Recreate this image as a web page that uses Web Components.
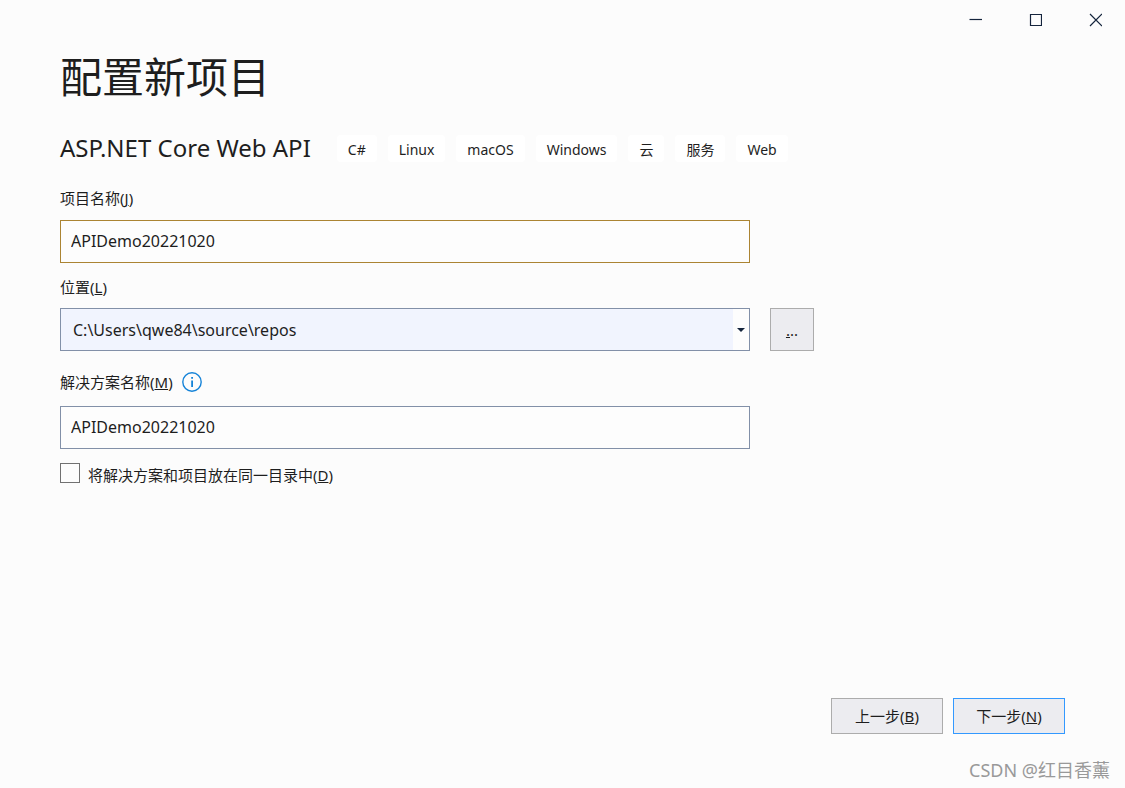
<!DOCTYPE html>
<html lang="zh-CN">
<head>
<meta charset="utf-8">
<title>配置新项目</title>
<style>
  body {
    margin: 0;
    background: #fcfcfc;
    color: #1e1e1e;
    font-family: "Noto Sans", "Noto Sans CJK SC", sans-serif;
    font-size: 15px;
    line-height: 20px;
  }
</style>
</head>
<body>
<project-wizard></project-wizard>

<template id="window-bar">
  <style>
    :host {
      display: flex;
      justify-content: flex-end;
    }

    button {
      display: flex;
      align-items: center;
      justify-content: center;
      width: 60px;
      height: 40px;
      padding: 0;
      border: 0;
      background: none;
    }

    svg {
      fill: none;
      stroke: #14243c;
      stroke-width: 1.2;
    }
  </style>
  <button type="button" aria-label="最小化">
    <svg width="14" height="14"><path d="M1.5 6.5h12.5"/></svg>
  </button>
  <button type="button" aria-label="最大化">
    <svg width="14" height="14"><path d="M2.5 1.5h11v11h-11z"/></svg>
  </button>
  <button type="button" aria-label="关闭">
    <svg width="14" height="14"><path d="M2 1l12 12M14 1L2 13"/></svg>
  </button>
</template>

<template id="tag-chip">
  <style>
    :host {
      padding: 5px 11px 2px;
      border-radius: 4px;
      background: #fff;
      font-size: 14px;
      white-space: nowrap;
    }
  </style>
  <slot></slot>
</template>

<template id="text-field">
  <style>
    :host {
      display: block;
    }

    .caption {
      display: flex;
      align-items: center;
      gap: 9px;
      margin-bottom: var(--caption-gap, 12px);
    }

    input {
      display: block;
      box-sizing: border-box;
      width: 100%;
      height: 43px;
      padding: 0 10px 2px;
      border: 1px solid var(--edge, #8290a8);
      border-radius: 0;
      outline: none;
      background: #fdfdfd;
      color: inherit;
      font: inherit;
      font-size: 16px;
    }
  </style>
  <div class="caption">
    <label for="box"><slot></slot></label>
    <slot name="hint"></slot>
  </div>
  <input id="box" type="text">
</template>

<template id="path-field">
  <style>
    :host {
      display: block;
    }

    label {
      display: block;
      margin-bottom: 11px;
    }

    .combo {
      display: grid;
      grid-template-columns: 1fr 16px;
      height: 43px;
      box-sizing: border-box;
      border: 1px solid #8290a8;
      background: #fdfdfd;
    }

    select {
      grid-area: 1 / 1 / 2 / 3;
      appearance: none;
      padding: 0 28px 0 12px;
      border: 0;
      border-radius: 0;
      outline: none;
      background: linear-gradient(to left, transparent 16px, #f1f4fe 16px);
      color: inherit;
      font: inherit;
      font-size: 16px;
    }

    svg {
      grid-area: 1 / 2 / 2 / 3;
      place-self: center;
      pointer-events: none;
      fill: #14243c;
    }
  </style>
  <label for="path"><slot></slot></label>
  <div class="combo">
    <select id="path"></select>
    <svg width="8" height="4"><path d="M0 0h8L4 4z"/></svg>
  </div>
</template>

<template id="check-field">
  <style>
    :host {
      display: flex;
      gap: 8px;
    }

    input {
      appearance: none;
      flex: none;
      width: 20px;
      height: 20px;
      margin: 0;
      border: 1px solid #717171;
      background: #fdfdfd;
    }

    input:checked {
      background: #0078d4;
    }

    label {
      padding-top: 2px;
    }
  </style>
  <input id="check" type="checkbox">
  <label for="check"><slot></slot></label>
</template>

<template id="push-button">
  <style>
    :host {
      display: flex;
    }

    button {
      flex: 1;
      padding: 0;
      border: 1px solid var(--edge, #acacac);
      border-radius: 0;
      background: #ececf0;
      color: inherit;
      font: inherit;
    }
  </style>
  <button type="button"><slot></slot></button>
</template>

<template id="info-icon">
  <style>
    :host {
      display: flex;
    }
  </style>
  <svg width="20" height="20" role="img" aria-label="信息">
    <circle cx="10" cy="10" r="9.2" fill="none" stroke="#1583d8" stroke-width="1.4"/>
    <path d="M9.2 5h1.8v1.8H9.2zM9.2 8.4h1.8V15H9.2z" fill="#1583d8"/>
  </svg>
</template>

<template id="project-wizard">
  <style>
    :host {
      display: flex;
      flex-direction: column;
      min-height: 100vh;
    }

    main {
      flex: 1;
      padding: 7px 60px 0;
    }

    h1, h2 {
      margin: 0;
      font-weight: 400;
    }

    h1 {
      font-size: 42px;
      line-height: 60px;
    }

    h2 {
      margin-right: 15px;
      font-size: 24px;
      line-height: 32px;
    }

    .kind {
      display: flex;
      flex-wrap: wrap;
      align-items: center;
      gap: 11px;
      margin: 25px 0 24px;
    }

    .fields {
      display: grid;
      grid-template-columns: minmax(0, 690px) 44px;
      column-gap: 20px;
    }

    text-field, path-field, check-field {
      grid-column: 1;
    }

    path-field {
      margin: 14px 0 21px;
    }

    .active {
      --edge: #ab8433;
    }

    .browse {
      align-self: end;
      height: 43px;
      margin-bottom: 21px;
    }

    .solution {
      --caption-gap: 14px;
    }

    check-field {
      margin-top: 14px;
    }

    .steps {
      display: flex;
      justify-content: flex-end;
      gap: 10px;
      padding: 0 60px;
    }

    .steps push-button {
      width: 112px;
      height: 36px;
    }

    .next {
      --edge: #3399ff;
    }

    .mark {
      margin: 23px 15px 5px;
      color: #999;
      font-size: 18px;
      line-height: 26px;
      text-align: right;
    }
  </style>
  <window-bar></window-bar>
  <main>
    <h1>配置新项目</h1>
    <div class="kind">
      <h2>ASP.NET Core Web API</h2>
      <tag-chip>C#</tag-chip>
      <tag-chip>Linux</tag-chip>
      <tag-chip>macOS</tag-chip>
      <tag-chip>Windows</tag-chip>
      <tag-chip>云</tag-chip>
      <tag-chip>服务</tag-chip>
      <tag-chip>Web</tag-chip>
    </div>
    <div class="fields">
      <text-field class="active" value="APIDemo20221020">项目名称(<u>J</u>)</text-field>
      <path-field value="C:\Users\qwe84\source\repos">位置(<u>L</u>)</path-field>
      <push-button class="browse"><u>.</u>..</push-button>
      <text-field class="solution" value="APIDemo20221020">解决方案名称(<u>M</u>)<info-icon slot="hint"></info-icon></text-field>
      <check-field>将解决方案和项目放在同一目录中(<u>D</u>)</check-field>
    </div>
  </main>
  <div class="steps">
    <push-button>上一步(<u>B</u>)</push-button>
    <push-button class="next">下一步(<u>N</u>)</push-button>
  </div>
  <div class="mark">CSDN @红目香薰</div>
</template>

<script>
  class TemplateElement extends HTMLElement {
    constructor() {
      super();
      const template = document.getElementById(this.localName);
      this._shadowRoot = this.attachShadow({ mode: 'open' });
      this._shadowRoot.appendChild(template.content.cloneNode(true));
    }
  }

  class WindowBar extends TemplateElement {}
  class TagChip extends TemplateElement {}
  class CheckField extends TemplateElement {}
  class PushButton extends TemplateElement {}
  class InfoIcon extends TemplateElement {}
  class ProjectWizard extends TemplateElement {}

  class TextField extends TemplateElement {
    connectedCallback() {
      this._shadowRoot.querySelector('input').value = this.getAttribute('value');
    }
  }

  class PathField extends TemplateElement {
    connectedCallback() {
      const $select = this._shadowRoot.querySelector('select');
      $select.replaceChildren(new Option(this.getAttribute('value')));
    }
  }

  customElements.define('window-bar', WindowBar);
  customElements.define('tag-chip', TagChip);
  customElements.define('text-field', TextField);
  customElements.define('path-field', PathField);
  customElements.define('check-field', CheckField);
  customElements.define('push-button', PushButton);
  customElements.define('info-icon', InfoIcon);
  customElements.define('project-wizard', ProjectWizard);
</script>
</body>
</html>
